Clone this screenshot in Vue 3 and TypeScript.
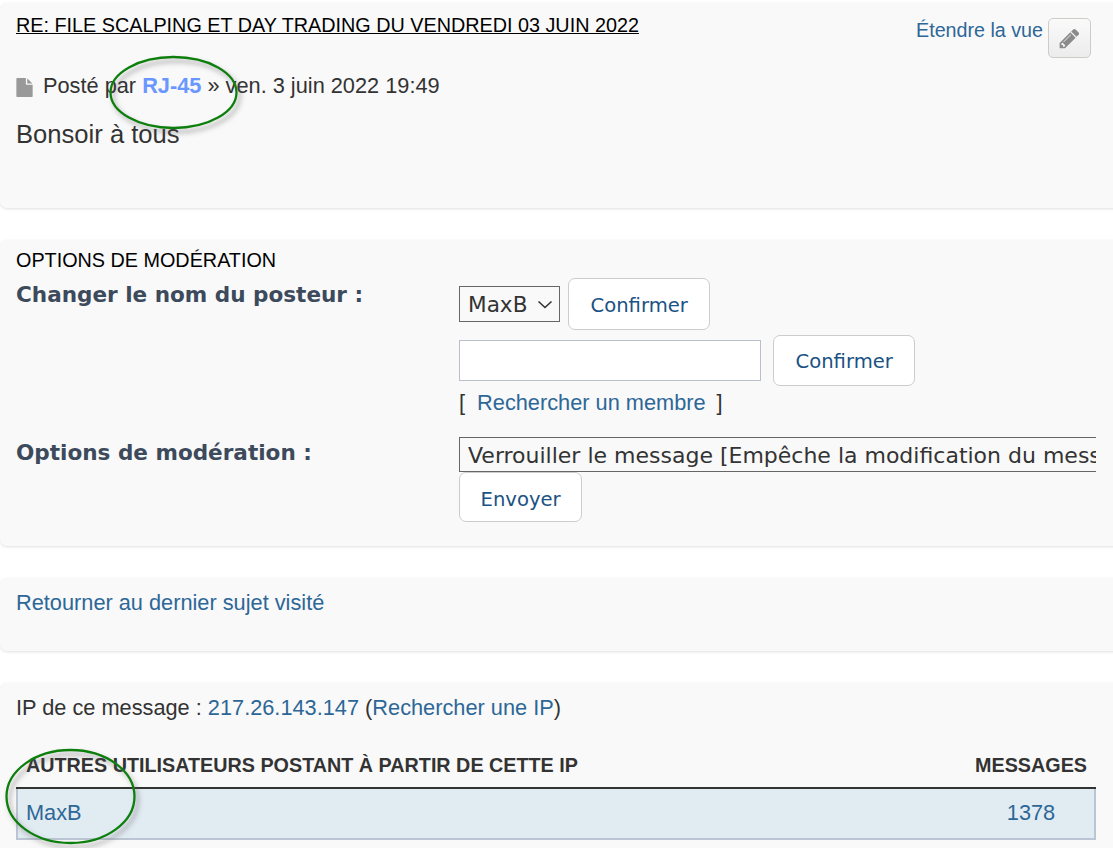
<script setup lang="ts">
const longOption = "Verrouiller le message [Empêche la modification du message]";
const users = [{ name: "MaxB", posts: 1378 }];
</script>

<template>
  <div class="page">
    <div class="panel post">
      <div class="post-head">
        <h3><a href="#">RE: FILE SCALPING ET DAY TRADING DU VENDREDI 03 JUIN 2022</a></h3>
        <div class="post-tools">
          <a href="#" class="link">Étendre la vue</a>
          <a href="#" class="edit-btn" title="Éditer">
            <svg viewBox="0 0 1792 1792" width="23" height="23"><path fill="#8a8a8a" d="M491 1536l91-91-235-235-91 91v107h128v128h107zm523-928q0-22-22-22-10 0-17 7l-542 542q-7 7-7 17 0 22 22 22 10 0 17-7l542-542q7-7 7-17zm-54-192l416 416-832 832h-416v-416zm683 96q0 53-37 90l-166 166-416-416 166-165q36-38 90-38 53 0 91 38l235 234q37 39 37 91z"/></svg>
          </a>
        </div>
      </div>
      <p class="author">
        <svg viewBox="0 0 1792 1792" width="19" height="19"><path fill="#999" d="M1152 512v-472q22 14 36 28l408 408q14 14 28 36h-472zm-128 32q0 40 28 68t68 28h544v1056q0 40-28 68t-68 28h-1344q-40 0-68-28t-28-68v-1600q0-40 28-68t68-28h800v544z"/></svg>
        <span>Posté par <a href="#" class="username">RJ-45</a> » ven. 3 juin 2022 19:49</span>
      </p>
      <p class="content">Bonsoir à tous</p>
    </div>

    <form class="panel mod" @submit.prevent>
      <h3>OPTIONS DE MODÉRATION</h3>
      <div class="field first">
        <label>Changer le nom du posteur :</label>
        <div class="controls">
          <div class="line line-a">
            <select class="pick short"><option>MaxB</option></select>
            <button class="btn">Confirmer</button>
          </div>
          <div class="line line-b">
            <input type="text" class="box" />
            <button class="btn tight">Confirmer</button>
          </div>
          <div class="search">[ <a href="#" class="link">Rechercher un membre</a> ]</div>
        </div>
      </div>
      <div class="field second">
        <label>Options de modération :</label>
        <div class="controls">
          <div class="clip"><select class="pick wide"><option>{{ longOption }}</option></select></div>
          <button class="btn send">Envoyer</button>
        </div>
      </div>
    </form>

    <div class="panel back">
      <a href="#" class="link">Retourner au dernier sujet visité</a>
    </div>

    <div class="panel ip">
      <p>IP de ce message : <a href="#" class="link">217.26.143.147</a> (<a href="#" class="link">Rechercher une IP</a>)</p>
      <table>
        <thead>
          <tr><th class="who">AUTRES UTILISATEURS POSTANT À PARTIR DE CETTE IP</th><th class="num">MESSAGES</th></tr>
        </thead>
        <tbody>
          <tr v-for="u in users" :key="u.name">
            <td class="who"><a href="#" class="link">{{ u.name }}</a></td>
            <td class="count"><a href="#" class="link">{{ u.posts }}</a></td>
          </tr>
        </tbody>
      </table>
    </div>

    <!-- green annotation circles drawn over the screenshot -->
    <svg class="marks" width="1113" height="848">
      <defs>
        <filter id="soft" x="-20%" y="-20%" width="140%" height="140%">
          <feDropShadow dx="3" dy="4" stdDeviation="2.5" flood-color="#555" flood-opacity="0.55" />
        </filter>
      </defs>
      <ellipse cx="173.5" cy="92.5" rx="63" ry="35.5" fill="none" stroke="#0c7f0c" stroke-width="2.3" filter="url(#soft)" />
      <ellipse cx="70.5" cy="796.5" rx="64" ry="46.5" fill="none" stroke="#0c7f0c" stroke-width="2.3" filter="url(#soft)" />
    </svg>
  </div>
</template>

<style scoped>
.page {
  position: relative;
  height: 848px;
  overflow: hidden;
  padding-top: 3px;
  box-sizing: border-box;
  font-family: "Liberation Sans", Arial, sans-serif;
  font-size: 21.75px;
  color: #333;
}

.panel {
  background: #f9f9f9;
  border-radius: 7px;
  box-shadow: 0 1px 3px rgba(0, 0, 0, 0.12);
  padding: 0 16px;
  margin-bottom: 32px;
  margin-right: -10px;
}

a {
  text-decoration: none;
}

.link {
  color: #2d6797;
}

.post {
  height: 205px;
  box-sizing: border-box;
}

.post-head {
  display: flex;
  justify-content: space-between;
  padding-top: 10px;
}

h3 {
  margin: 0;
  font-weight: normal;
  font-size: 19.8px;
  line-height: 24px;
  color: #000;
}

h3 a {
  color: #000;
  text-decoration: underline;
}

.post-tools {
  display: flex;
  align-items: flex-start;
  gap: 5px;
  margin-right: 16px;
  margin-top: 5px;
}

.post-tools .link {
  font-size: 19.7px;
  line-height: 24px;
}

.edit-btn {
  width: 41px;
  height: 38px;
  border: 1px solid #cfccc8;
  border-radius: 5px;
  background: linear-gradient(#fafafa, #ececec);
  display: flex;
  align-items: center;
  justify-content: center;
}

.author {
  margin: 0;
  padding-top: 15px;
  line-height: 26px;
  display: flex;
  align-items: center;
  gap: 9px;
}

.author svg {
  margin-left: -1px;
  margin-top: 2px;
}

.username {
  color: #6a97ff;
  font-weight: bold;
}

.content {
  margin: 0;
  padding-top: 21px;
  font-size: 25.6px;
  line-height: 28px;
}

.mod {
  height: 306px;
  box-sizing: border-box;
  padding-top: 8px;
}

.field {
  display: flex;
  font-family: "DejaVu Sans", Verdana, sans-serif;
}

.field label {
  width: 443px;
  flex: none;
  font-weight: bold;
  font-size: 21.55px;
  line-height: 26px;
  color: #3c4a5c;
}

.first {
  padding-top: 10px;
}

.controls {
  flex: 1;
  min-width: 0;
}

.line {
  display: flex;
  align-items: center;
}

.line-a {
  gap: 8px;
  margin-top: -4px;
}

.line-b {
  gap: 12px;
  margin-top: 5px;
}

.pick {
  font-family: "DejaVu Sans", Verdana, sans-serif;
  font-size: 21.6px;
  height: 36px;
  border: 1px solid #666;
  border-radius: 0;
  background-color: #f9f9f9;
  color: #333;
  appearance: none;
  padding: 0 8px;
}

.short {
  width: 101px;
  background-image: url("data:image/svg+xml,%3Csvg xmlns='http://www.w3.org/2000/svg' width='16' height='9'%3E%3Cpath d='M1.5 1.5 8 7.5l6.5-6' fill='none' stroke='%23333' stroke-width='1.6'/%3E%3C/svg%3E");
  background-repeat: no-repeat;
  background-position: right 6px center;
}

.clip {
  width: 637px;
  overflow: hidden;
}

.wide {
  display: block;
  width: 800px;
  height: 35px;
  padding-top: 1px;
  font-size: 22px;
}

.box {
  width: 302px;
  height: 41px;
  box-sizing: border-box;
  border: 1px solid #b9c0cb;
  background: #fff;
}

.btn {
  font-family: "DejaVu Sans", Verdana, sans-serif;
  font-size: 19.6px;
  color: #1a5283;
  background: #fff;
  border: 1px solid #ccc;
  border-radius: 7px;
  padding: 2px 21.5px 0;
  height: 52px;
}

.tight {
  height: 51px;
}

.search {
  font-family: "Liberation Sans", Arial, sans-serif;
  margin-top: 4px;
  line-height: 26px;
  word-spacing: 2px;
}

.search .link {
  word-spacing: 0;
  margin: 0 3px 0 4px;
}

.second {
  margin-top: 21px;
}

.second label {
  padding-top: 3px;
}

.send {
  display: block;
  height: 50px;
  padding: 4px 20.5px 0;
}

.back {
  height: 73px;
  box-sizing: border-box;
  padding-top: 12px;
  line-height: 26px;
}

.ip {
  padding-top: 12px;
  height: 200px;
  box-sizing: border-box;
}

.ip p {
  margin: 0;
  line-height: 26px;
}

table {
  width: 1080px;
  margin-top: 30px;
  border-collapse: collapse;
}

th {
  font-weight: bold;
  font-size: 19.75px;
  height: 37px;
  padding: 0 9px 7px 9px;
  box-sizing: border-box;
  text-align: left;
  color: #333;
  border-bottom: 2px solid #333;
}

th.num {
  width: 112px;
  text-align: right;
  padding-right: 8px;
}

td {
  background: #e1ebf2;
  height: 51px;
  padding: 0 9px 2px;
  box-sizing: border-box;
  border-bottom: 2px solid #bcc5d3;
}

td.who {
  border-left: 2px solid #bcc5d3;
  padding-left: 8px;
}

td.count {
  text-align: center;
  border-right: 2px solid #bcc5d3;
  padding-left: 11px;
}

.marks {
  position: absolute;
  left: 0;
  top: 0;
  pointer-events: none;
}
</style>

<style>
html,
body {
  margin: 0;
  background: #fff;
}
</style>
